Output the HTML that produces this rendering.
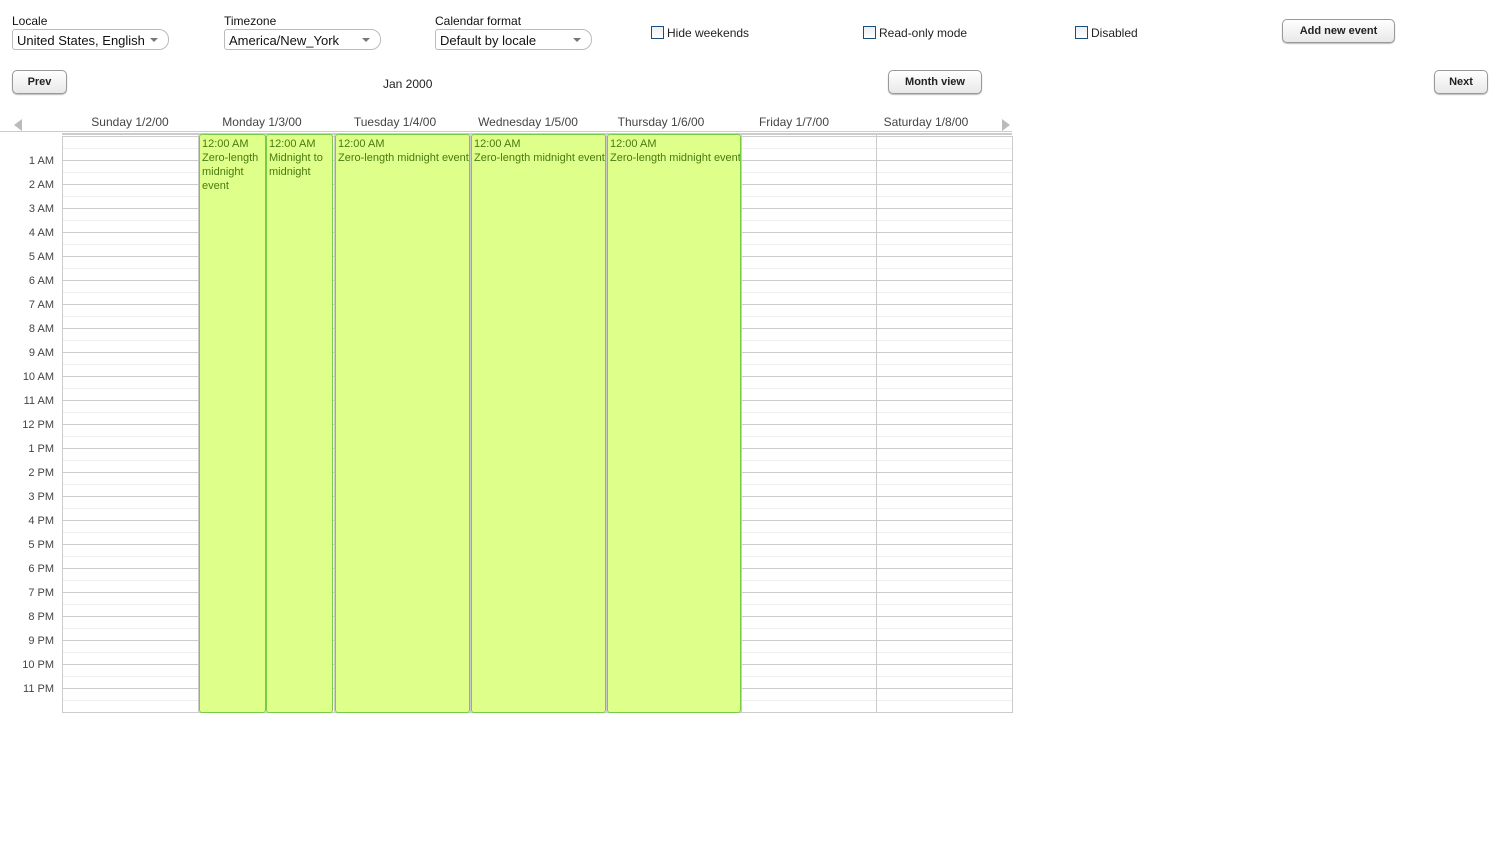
<!DOCTYPE html>
<html><head><style>
body{margin:0;width:1500px;height:850px;background:#fff;font-family:"Liberation Sans",sans-serif;font-size:12px;color:#222;position:relative;overflow:hidden}
.a{position:absolute}
.lbl{font-size:12px;color:#111}
.sel{position:absolute;height:21px;border:1px solid #bbb;border-radius:3px 10px 10px 3px;font-size:13px;line-height:21px;padding-left:4px;box-sizing:border-box;color:#111}
.sel:after{content:"";position:absolute;right:10px;top:8px;border:4px solid transparent;border-top:4px solid #777}
.btn{position:absolute;height:24px;border:1px solid #999;border-radius:5px;background:linear-gradient(#fff,#e8e8e8);font-weight:bold;font-size:11px;text-align:center;line-height:23px;box-sizing:border-box;box-shadow:0 1px 1px #bbb}
.cb{position:absolute;width:11px;height:11px;border:1px solid #1c4c7c;background:linear-gradient(#eee,#fff)}
.cbl{position:absolute;font-size:12px;color:#222}
.hd{position:absolute;top:115px;font-size:12px;color:#444;text-align:center;width:136px}
.hr{position:absolute;left:0;width:54px;text-align:right;font-size:11px;color:#444}
.ev{position:absolute;top:134px;height:579px;background:#deff8a;border:1px solid #7c4;border-radius:3px;box-sizing:border-box;color:#4a7a10;font-size:11px;line-height:14px;padding:2px 2px;overflow:hidden}
</style></head><body>
<div class="a lbl" style="left:12px;top:14px">Locale</div>
<div class="sel" style="left:12px;top:29px;width:157px">United States, English</div>
<div class="a lbl" style="left:224px;top:14px">Timezone</div>
<div class="sel" style="left:224px;top:29px;width:157px">America/New_York</div>
<div class="a lbl" style="left:435px;top:14px">Calendar format</div>
<div class="sel" style="left:435px;top:29px;width:157px">Default by locale</div>
<div class="cb" style="left:651px;top:26px"></div><div class="cbl" style="left:667px;top:26px">Hide weekends</div>
<div class="cb" style="left:863px;top:26px"></div><div class="cbl" style="left:879px;top:26px">Read-only mode</div>
<div class="cb" style="left:1075px;top:26px"></div><div class="cbl" style="left:1091px;top:26px">Disabled</div>
<div class="btn" style="left:1282px;top:19px;width:113px">Add new event</div>
<div class="btn" style="left:12px;top:70px;width:55px">Prev</div>
<div class="a" style="left:383px;top:77px;font-size:12px">Jan 2000</div>
<div class="btn" style="left:888px;top:70px;width:94px">Month view</div>
<div class="btn" style="left:1434px;top:70px;width:54px">Next</div>
<div class="a" style="left:14px;top:119px;border:6px solid transparent;border-right:8px solid #bbb;border-left:0;width:0;height:0"></div>
<div class="a" style="left:1002px;top:119px;border:6px solid transparent;border-left:8px solid #bbb;border-right:0;width:0;height:0"></div>
<div class="hd" style="left:62px">Sunday 1/2/00</div>
<div class="hd" style="left:194px">Monday 1/3/00</div>
<div class="hd" style="left:327px">Tuesday 1/4/00</div>
<div class="hd" style="left:460px">Wednesday 1/5/00</div>
<div class="hd" style="left:593px">Thursday 1/6/00</div>
<div class="hd" style="left:726px">Friday 1/7/00</div>
<div class="hd" style="left:858px">Saturday 1/8/00</div>
<div class="a" style="left:0;top:131px;width:1012px;height:1px;background:#ccc"></div>
<div class="a" style="left:62px;top:133px;width:950px;height:2px;background:#ccc"></div>
<div class="a" style="left:62px;top:136px;width:949px;height:576px;border-left:1px solid #ccc;border-right:1px solid #ccc;border-bottom:1px solid #ccc;background:repeating-linear-gradient(to bottom,#ccc 0 1px,transparent 1px 12px,#eee 12px 13px,transparent 13px 24px)"></div>
<div class="a" style="left:198px;top:133px;width:1px;height:580px;background:#ccc"></div>
<div class="a" style="left:334px;top:133px;width:1px;height:580px;background:#ccc"></div>
<div class="a" style="left:470px;top:133px;width:1px;height:580px;background:#ccc"></div>
<div class="a" style="left:606px;top:133px;width:1px;height:580px;background:#ccc"></div>
<div class="a" style="left:741px;top:133px;width:1px;height:580px;background:#ccc"></div>
<div class="a" style="left:876px;top:133px;width:1px;height:580px;background:#ccc"></div>
<div class="hr" style="top:155px">1 AM</div><div class="hr" style="top:179px">2 AM</div><div class="hr" style="top:203px">3 AM</div><div class="hr" style="top:227px">4 AM</div><div class="hr" style="top:251px">5 AM</div><div class="hr" style="top:275px">6 AM</div><div class="hr" style="top:299px">7 AM</div><div class="hr" style="top:323px">8 AM</div><div class="hr" style="top:347px">9 AM</div><div class="hr" style="top:371px">10 AM</div><div class="hr" style="top:395px">11 AM</div><div class="hr" style="top:419px">12 PM</div><div class="hr" style="top:443px">1 PM</div><div class="hr" style="top:467px">2 PM</div><div class="hr" style="top:491px">3 PM</div><div class="hr" style="top:515px">4 PM</div><div class="hr" style="top:539px">5 PM</div><div class="hr" style="top:563px">6 PM</div><div class="hr" style="top:587px">7 PM</div><div class="hr" style="top:611px">8 PM</div><div class="hr" style="top:635px">9 PM</div><div class="hr" style="top:659px">10 PM</div><div class="hr" style="top:683px">11 PM</div>
<div class="ev" style="left:199px;width:67px">12:00 AM<br>Zero-length midnight event</div>
<div class="ev" style="left:266px;width:67px">12:00 AM<br>Midnight to midnight</div>
<div class="ev" style="left:335px;width:135px;white-space:nowrap">12:00 AM<br>Zero-length midnight event</div>
<div class="ev" style="left:471px;width:135px;white-space:nowrap">12:00 AM<br>Zero-length midnight event</div>
<div class="ev" style="left:607px;width:134px;white-space:nowrap">12:00 AM<br>Zero-length midnight event</div>
</body></html>
